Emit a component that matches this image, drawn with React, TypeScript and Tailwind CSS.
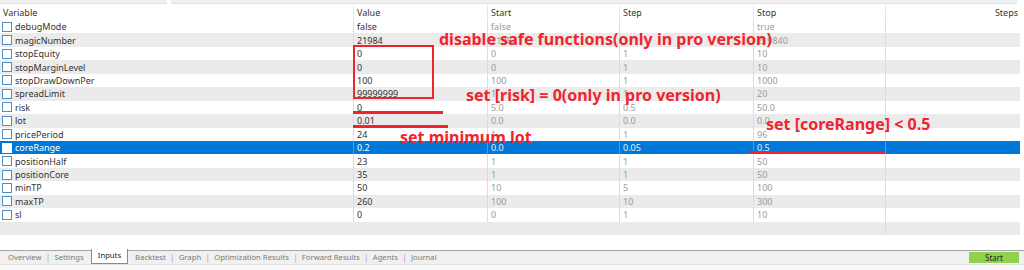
import React from "react";

type Row = { name: string; value: string; start: string; step: string; stop: string; sel?: boolean };

const rows: Row[] = [
  { name: "debugMode", value: "false", start: "false", step: "", stop: "true" },
  { name: "magicNumber", value: "21984", start: "21984", step: "1", stop: "219840" },
  { name: "stopEquity", value: "0", start: "0", step: "1", stop: "10" },
  { name: "stopMarginLevel", value: "0", start: "0", step: "1", stop: "10" },
  { name: "stopDrawDownPer", value: "100", start: "100", step: "1", stop: "1000" },
  { name: "spreadLimit", value: "99999999", start: "1", step: "1", stop: "20" },
  { name: "risk", value: "0", start: "5.0", step: "0.5", stop: "50.0" },
  { name: "lot", value: "0.01", start: "0.0", step: "0.0", stop: "0.0" },
  { name: "pricePeriod", value: "24", start: "1", step: "1", stop: "96" },
  { name: "coreRange", value: "0.2", start: "0.0", step: "0.05", stop: "0.5", sel: true },
  { name: "positionHalf", value: "23", start: "1", step: "1", stop: "50" },
  { name: "positionCore", value: "35", start: "1", step: "1", stop: "50" },
  { name: "minTP", value: "50", start: "10", step: "5", stop: "100" },
  { name: "maxTP", value: "260", start: "100", step: "10", stop: "300" },
  { name: "sl", value: "0", start: "0", step: "1", stop: "10" },
];

const cols = "grid grid-cols-[353px_134px_132px_134px_132px_1fr]";
const font = { fontFamily: '"Noto Sans", "Open Sans", sans-serif' };

function Cell({ children, sel, muted, first }: { children?: React.ReactNode; sel?: boolean; muted?: boolean; first?: boolean }) {
  return (
    <div
      className={`flex items-center pl-[3px] overflow-hidden whitespace-nowrap ${first ? "" : sel ? "border-l border-[#4a9ae6]" : "border-l border-[#dcdcdc]"} ${
        sel ? (muted ? "text-[#e6f0fa]" : "text-white") : muted ? "text-[#9a9a9a]" : "text-[#333333]"
      }`}
    >
      {children}
    </div>
  );
}

function Check({ sel }: { sel?: boolean }) {
  return (
    <span
      className={`inline-block w-[10px] h-[10px] mr-[3px] ml-[-1px] border ${sel ? "border-white bg-white" : "border-[#4f8fc8] bg-white"}`}
    />
  );
}

const tabs = ["Overview", "Settings", "Inputs", "Backtest", "Graph", "Optimization Results", "Forward Results", "Agents", "Journal"];

export default function App() {
  return (
    <div className="relative w-[1024px] h-[270px] bg-white overflow-hidden text-[9px] leading-none" style={font}>
      {/* top strip */}
      <div className="flex h-[5px] bg-white">
        <div className="w-[167px] h-[4px] bg-[#f0f0f0] border-b border-[#e2e2e2]" />
        <div className="w-[4px]" />
        <div className="w-[846px] h-[4px] bg-[#f0f0f0] border-b border-[#e2e2e2]" />
      </div>
      <div className="w-[1020px]">
        {/* header */}
        <div className={`${cols} h-[15px] bg-white text-[#333333]`}>
          <div className="flex items-center pl-[3px]">Variable</div>
          <div className="flex items-center pl-[3px] border-l border-[#e8e8e8]">Value</div>
          <div className="flex items-center pl-[3px] border-l border-[#e8e8e8]">Start</div>
          <div className="flex items-center pl-[3px] border-l border-[#e8e8e8]">Step</div>
          <div className="flex items-center pl-[3px] border-l border-[#e8e8e8]">Stop</div>
          <div className="flex items-center justify-end pr-[2px] border-l border-[#e8e8e8]">Steps</div>
        </div>
        {rows.map((r, i) => (
          <div
            key={r.name}
            className={`${cols} h-[13.44px] ${r.sel ? "bg-[#0078d7]" : i % 2 === 1 ? "bg-[#ebebeb]" : "bg-white"}`}
          >
            <Cell first sel={r.sel}>
              <Check sel={r.sel} />
              {r.name}
            </Cell>
            <Cell sel={r.sel}>{r.value}</Cell>
            <Cell sel={r.sel} muted>{r.start}</Cell>
            <Cell sel={r.sel} muted>{r.step}</Cell>
            <Cell sel={r.sel} muted>{r.stop}</Cell>
            <Cell sel={r.sel} />
          </div>
        ))}
        <div className={`${cols} h-[13.44px] bg-[#ebebeb]`}>
          <div />
          <div />
          <div />
          <div />
          <div />
          <div className="border-l border-[#dcdcdc]" />
        </div>
      </div>
      {/* spacer */}
      <div className="h-[15px] bg-white" />
      {/* tab bar */}
      <div className="flex items-center h-[14px] bg-[#f0f0f0] border-t border-[#a6a6a6] text-[#7a7a7a] text-[7.7px]">
        <div className="flex items-center pl-[8px] h-full">
          {tabs.map((t, i) => {
            const active = t === "Inputs";
            const prevActive = tabs[i - 1] === "Inputs";
            return (
              <React.Fragment key={t}>
                {i > 0 && !active && !prevActive && <span className="mx-[4px] text-[#b0b0b0] text-[9px]">|</span>}
                {active ? (
                  <span className="ml-[7px] mr-[7px] -mt-[2px] h-[15px] px-[6px] flex items-center bg-white border border-t-0 border-[#8a8a8a] text-[#222222]">
                    {t}
                  </span>
                ) : (
                  <span>{t}</span>
                )}
              </React.Fragment>
            );
          })}
        </div>
        <div className="ml-auto mr-[5px] w-[50px] h-[11px] bg-[#92d050] flex items-center justify-center text-[#1f1f1f] text-[8px]">Start</div>
      </div>
      <div className="h-[6px] bg-[#f7f7f7] border-t border-[#e0e0e0]" />

      {/* annotations */}
      <div className="absolute left-[353px] top-[45px] w-[81px] h-[54px] border-2 border-[#f0242e]" />
      <div className="absolute left-[353px] top-[111px] w-[90px] h-[3px] bg-[#f0242e]" />
      <div className="absolute left-[353px] top-[125px] w-[95px] h-[3px] bg-[#f0242e]" />
      <div className="absolute left-[750px] top-[151px] w-[135px] h-[3px] bg-[#f0242e]" />
      <div className="absolute left-[439px] top-[31px] text-[16px] font-bold text-[#f0242e] whitespace-nowrap">
        disable safe functions(only in pro version)
      </div>
      <div className="absolute left-[466px] top-[87px] text-[16px] font-bold text-[#f0242e] whitespace-nowrap">
        set [risk] = 0(only in pro version)
      </div>
      <div className="absolute left-[400px] top-[129px] text-[16px] font-bold text-[#f0242e] whitespace-nowrap">
        set minimum lot
      </div>
      <div className="absolute left-[766px] top-[116px] text-[16px] font-bold text-[#f0242e] whitespace-nowrap">
        set [coreRange] &lt; 0.5
      </div>
    </div>
  );
}
